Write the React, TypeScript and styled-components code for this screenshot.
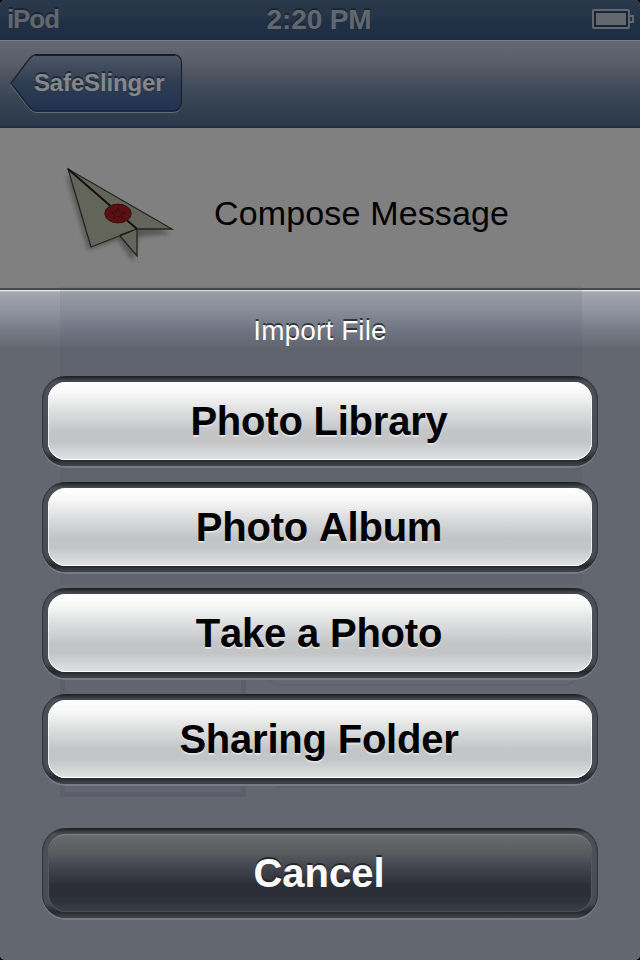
import React from "react";
import styled, { createGlobalStyle } from "styled-components";

const GlobalStyle = createGlobalStyle`
  * { box-sizing: border-box; }
  body { margin: 0; background: #000; }
`;

const Screen = styled.main`
  width: 640px;
  height: 960px;
  display: flex;
  flex-direction: column;
  overflow: hidden;
  border-radius: 5px;
  background: #808080;
  font-family: "Liberation Sans", Arial, Helvetica, sans-serif;
  font-kerning: none;
`;

const StatusBar = styled.header`
  height: 40px;
  flex: none;
  display: grid;
  grid-template-columns: 1fr auto 1fr;
  align-items: center;
  padding: 0 6px 2px 7px;
  background: linear-gradient(#2a384b 0, #263548 14px, #203044 24px, #1f2d41 40px);
  color: #62676e;
  font-weight: 700;
  text-shadow: 0 -2px 0 #1c2735;
`;

const Carrier = styled.span`
  font-size: 26px;
  line-height: 36px;
  letter-spacing: -1.1px;
`;

const Clock = styled.span`
  font-size: 28px;
  line-height: 36px;
  letter-spacing: -0.15px;
  padding: 1px 3px 0 0;
`;

const Battery = styled.svg`
  justify-self: end;
  display: block;
`;

const NavBar = styled.nav`
  height: 88px;
  flex: none;
  padding: 13px 0 0 10px;
  border-top: 1px solid #7b7e82;
  border-bottom: 2px solid #1f2d41;
  background: linear-gradient(#646871 0, #5b5f69 20px, #50545f 32px, #414d5b 45px, #374454 60px, #2b394c 84px);
`;

const BackButton = styled.button`
  position: relative;
  display: block;
  width: 173px;
  height: 60px;
  padding: 0 0 2px 24px;
  border: 0;
  background: none;
  color: #848688;
  font: 700 24px/56px "Liberation Sans", Arial, sans-serif;
  text-align: left;
  letter-spacing: -0.15px;
  text-shadow: 0 -2px 0 #202b3a;
`;

const BackShape = styled.svg`
  position: absolute;
  inset: 0;
`;

const BackLabel = styled.span`
  position: relative;
`;

const TitleRow = styled.section`
  height: 160px;
  flex: none;
  display: flex;
  align-items: center;
  gap: 34px;
  padding: 14px 0 0 50px;
  background: #808080;
`;

const Title = styled.h1`
  margin: 0;
  padding-bottom: 4px;
  font-size: 34px;
  line-height: 40px;
  font-weight: 400;
  letter-spacing: 0.15px;
  color: #000;
`;

const Sheet = styled.section`
  position: relative;
  flex: 1;
  display: flex;
  flex-direction: column;
  align-items: center;
  border-top: 2px solid #45484d;
  background: linear-gradient(#e3e4e6 0, #e3e4e6 1px, #babcc1 1px, #babcc1 2px, #a4a7ae 2px, #9195a0 20px, #747984 42px, #636770 59px, #636770 100%);
`;

const Backdrop = styled.div`
  position: absolute;
  inset: -4px 0 0;
  pointer-events: none;
`;

const PanelGhost = styled.div`
  position: absolute;
  left: 60px;
  top: 0;
  width: 522px;
  height: 298px;
  background: rgba(65, 74, 100, 0.11);
`;

const FrameGhost = styled.div`
  position: absolute;
  left: 60px;
  top: 376px;
  width: 186px;
  height: 135px;
  border: 5px solid rgba(83, 87, 98, 0.28);
  border-top: 0;
  background: rgba(90, 94, 103, 0.12);
`;

const FieldGhost = styled.div<{ $top: number }>`
  position: absolute;
  left: 262px;
  top: ${(p) => p.$top}px;
  width: 320px;
  height: 90px;
  border: 2px solid rgba(80, 84, 94, 0.22);
  border-radius: 20px;
`;

const SheetTitle = styled.h2`
  margin: 21px 0 25px;
  color: #fff;
  font-size: 28px;
  line-height: 40px;
  font-weight: 400;
  letter-spacing: 0.1px;
  text-shadow: 0 -2px 0 #30343c;
  position: relative;
`;

const Actions = styled.div`
  position: relative;
  display: flex;
  flex-direction: column;
  gap: 16px;
`;

const Action = styled.button<{ $dark?: boolean }>`
  width: 556px;
  height: 90px;
  padding: 6px;
  border: 0;
  border-radius: 24px;
  margin-top: ${(p) => (p.$dark ? "28px" : "0")};
  background: linear-gradient(#191a1e 0, #34373c 3px, #4c4f57 6px, #494c54 75px, #25272c 84px, #3b3e45 88px, #45484f 90px);
  box-shadow: inset 1px 0 1px #30333a, inset -1px 0 1px #30333a, 0 2px 0 #777b84;
`;

const ActionFace = styled.span<{ $dark?: boolean }>`
  display: block;
  width: 544px;
  height: 78px;
  padding-right: 2px;
  border-radius: 18px;
  background: ${(p) =>
    p.$dark
      ? "linear-gradient(#6b6c70 0, #5b5c5f 18px, #454750 32px, #2b2e37 52px, #2b2e36 62px, #384047 78px)"
      : "linear-gradient(#fff 0, #f8f8f8 11px, #dcddde 30px, #c3c4c6 50px, #c4c5c7 60px, #dedfe0 76px)"};
  box-shadow: ${(p) =>
    p.$dark
      ? "inset 0 1px 0 #7c7f84, inset 1px 0 0 #54575e, inset -1px 0 0 #54575e, inset 0 -1px 0 #485058"
      : "inset 0 -1px 0 #fff, inset 1px 0 0 rgba(255,255,255,.7), inset -1px 0 0 rgba(255,255,255,.7)"};
  color: ${(p) => (p.$dark ? "#fff" : "#000")};
  font: 700 40px/78px "Liberation Sans", Arial, sans-serif;
  font-kerning: none;
  letter-spacing: ${(p) => (p.$dark ? "0" : "-0.22px")};
  text-align: center;
  text-shadow: ${(p) => (p.$dark ? "0 -2px 0 #24262c" : "0 2px 0 #dedfe0")};
`;

const Plane = () => (
  <svg width="130" height="110" viewBox="50 160 130 110">
    <defs>
      <filter id="soft" x="-20%" y="-20%" width="140%" height="140%">
        <feGaussianBlur stdDeviation="2" />
      </filter>
    </defs>
    <path d="M66 175 88 250 118 240 133 262 138 237 171 234 123 210Z" fill="#333" opacity=".5" filter="url(#soft)" />
    <path d="M68 169 172 229 137 229 137 256 120 236 132 231 91 247Z" fill="#63645a" stroke="#25251f" strokeWidth="1.3" />
    <path d="M120 235 137 229" fill="none" stroke="#1b1b17" strokeWidth="1.3" />
    <path d="M68 169 137 229" stroke="#11110f" strokeWidth="2" />
    <ellipse cx="118" cy="213.5" rx="13.2" ry="9.4" fill="#591014" stroke="#391011" />
    <path d="M118 207 120 212 126 212 121 215 123 219 118 216 113 219 115 215 110 212 116 212Z" fill="none" stroke="#45090d" />
  </svg>
);

const actions = ["Photo Library", "Photo Album", "Take a Photo", "Sharing Folder"];

export default function App() {
  return (
    <>
      <GlobalStyle />
      <Screen>
        <StatusBar>
          <Carrier>iPod</Carrier>
          <Clock>2:20 PM</Clock>
          <Battery width="42" height="20" viewBox="0 0 42 20">
            <rect x="1" y="1" width="36" height="18" rx="1" fill="#182538" stroke="#62676e" strokeWidth="2" />
            <rect x="4" y="4" width="30" height="12" fill="#62676e" />
            <path d="M38 7h3v6h-3" fill="none" stroke="#62676e" strokeWidth="2" />
          </Battery>
        </StatusBar>
        <NavBar>
          <BackButton>
            <BackShape width="173" height="60" viewBox="0 0 173 60">
              <defs>
                <linearGradient id="back" x2="0" y2="1">
                  <stop stopColor="#505866" />
                  <stop offset=".5" stopColor="#2f3d52" />
                  <stop offset="1" stopColor="#203252" />
                </linearGradient>
              </defs>
              <path d="M27 2H163Q171 2 171 10V49Q171 57 163 57H27Q23 57 20 54L1 30 20 5Q23 2 27 2Z" transform="translate(0 1.5)" fill="none" stroke="#626a75" />
              <path d="M27 .5H163Q171.500 .5 171.500 9V48Q171.500 57 163 57H27Q23 57 20 54L1 29 20 4Q23 .5 27 .5Z" fill="url(#back)" stroke="#1b2432" strokeWidth="1.3" />
              <path d="M25 1H165" stroke="#181d27" strokeWidth="2" />
            </BackShape>
            <BackLabel>SafeSlinger</BackLabel>
          </BackButton>
        </NavBar>
        <TitleRow>
          <Plane />
          <Title>Compose Message</Title>
        </TitleRow>
        <Sheet>
          <Backdrop>
            <PanelGhost />
            <FrameGhost />
            <FieldGhost $top={310} />
            <FieldGhost $top={412} />
          </Backdrop>
          <SheetTitle>Import File</SheetTitle>
          <Actions>
            {actions.map((label) => (
              <Action key={label}>
                <ActionFace>{label}</ActionFace>
              </Action>
            ))}
            <Action $dark>
              <ActionFace $dark>Cancel</ActionFace>
            </Action>
          </Actions>
        </Sheet>
      </Screen>
    </>
  );
}
